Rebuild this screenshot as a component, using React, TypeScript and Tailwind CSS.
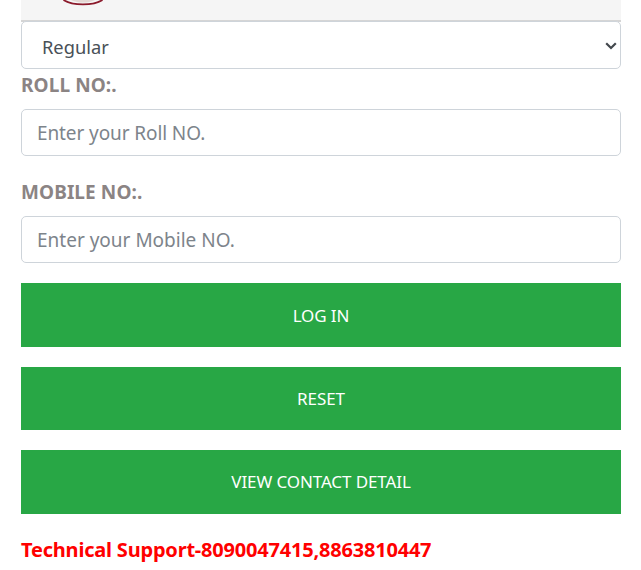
import React from 'react';

export default function App() {
    return (
        <div className="w-[641px] h-[570px] overflow-hidden bg-white px-[21px] font-['Noto_Sans',sans-serif]">
            <div className="w-[600px]">
                {/* Logo strip */}
                <div className="h-[22px] bg-[#f5f5f5] border-b-2 border-[#d5d5d5] pl-[41px] overflow-hidden">
                    <svg width="42" height="6" viewBox="0 0 42 6" className="block">
                        <path d="M1.5 0 C7 3.4 13 4.4 21 4.4 C29 4.4 35 3.4 40.5 0" fill="none" stroke="#8b1a2b" strokeWidth="1.8" />
                        <path d="M9 0 C13 2 17 2.6 21 2.6 C25 2.6 29 2 33 0" fill="#e4d8d4" />
                    </svg>
                </div>
                <div className="relative -mt-px">
                    <select className="block w-full h-[48px] appearance-none bg-white border border-[#ced4da] rounded-[5px] pl-[20px] pr-[4px] pt-[3px] text-[18.3px] text-[#495057]">
                        <option>Regular</option>
                    </select>
                    <svg width="12" height="8" viewBox="0 0 12 8" className="absolute right-[4px] top-[21px] pointer-events-none">
                        <path d="M1.2 1.2 L6 6 L10.8 1.2" fill="none" stroke="#43484d" strokeWidth="2.2" />
                    </svg>
                </div>
                <label className="block h-[27px] mt-[3px] text-[19px] leading-[27px] font-bold text-[#8b8484] tracking-[0.1px]">ROLL NO:.</label>
                <input
                    placeholder="Enter your Roll NO."
                    className="block w-full h-[47px] mt-[10px] bg-white border border-[#ced4da] rounded-[5px] px-[15px] text-[19px] tracking-[-0.1px] text-[#495057] placeholder:text-[#7d848b]"
                />
                <label className="block h-[27px] mt-[23px] text-[19px] leading-[27px] font-bold text-[#8b8484] tracking-[0.1px]">MOBILE NO:.</label>
                <input
                    placeholder="Enter your Mobile NO."
                    className="block w-full h-[47px] mt-[10px] bg-white border border-[#ced4da] rounded-[5px] px-[15px] text-[19px] text-[#495057] placeholder:text-[#7d848b]"
                />
                <div className="flex flex-col gap-[20px] mt-[20px]">
                    <button className="h-[64px] pt-px bg-[#28a745] text-white text-[17px] tracking-[-0.1px]">LOG IN</button>
                    <button className="h-[63px] bg-[#28a745] text-white text-[17px] tracking-[-0.1px]">RESET</button>
                    <button className="h-[64px] bg-[#28a745] text-white text-[17px] tracking-[-0.1px]">VIEW CONTACT DETAIL</button>
                </div>
                <p className="mt-[22px] text-[20px] leading-[28px] font-bold text-[#ff0000] tracking-[-0.2px]">Technical Support-8090047415,8863810447</p>
            </div>
        </div>
    );
}
